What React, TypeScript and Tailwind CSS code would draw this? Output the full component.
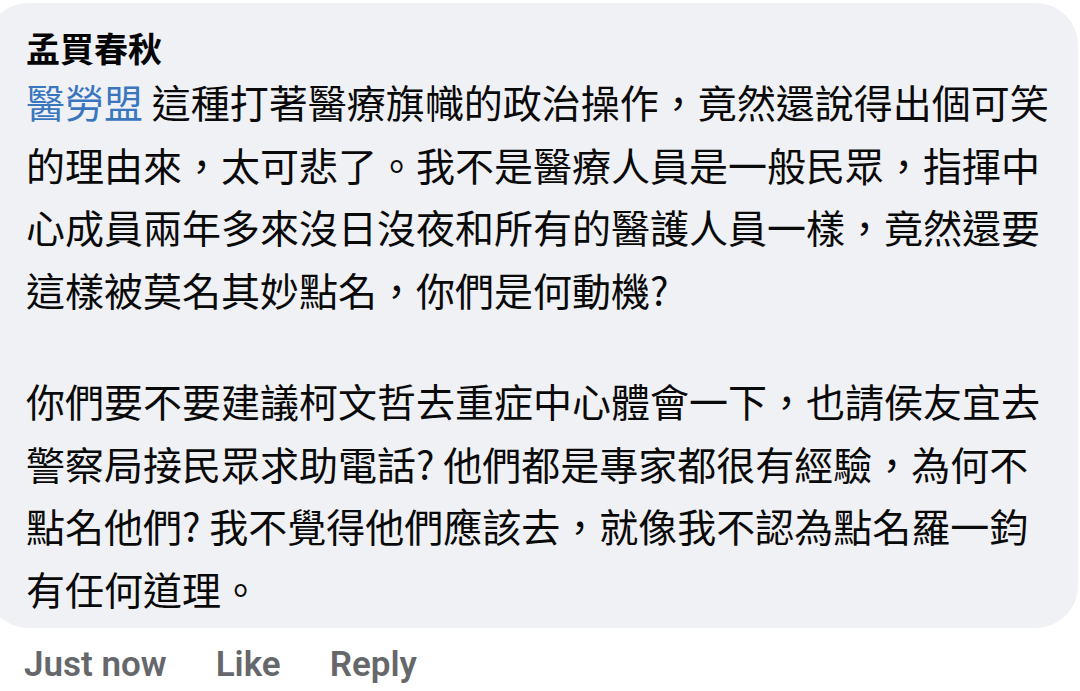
const cjk = "font-['Noto_Sans_CJK_TC','Noto_Sans_CJK_SC',sans-serif]";

const firstParagraph = [
  "的理由來，太可悲了。我不是醫療人員是一般民眾，指揮中",
  "心成員兩年多來沒日沒夜和所有的醫護人員一樣，竟然還要",
  "這樣被莫名其妙點名，你們是何動機?",
];

const secondParagraph = [
  "你們要不要建議柯文哲去重症中心體會一下，也請侯友宜去",
  "警察局接民眾求助電話? 他們都是專家都很有經驗，為何不",
  "點名他們? 我不覺得他們應該去，就像我不認為點名羅一鈞",
  "有任何道理。",
];

export default function App() {
  return (
    <div className="w-[1080px] h-[691px] overflow-hidden bg-white">
      {/* Comment bubble */}
      <div className="mt-[3px] ml-[-14px] w-[1092px] rounded-[42px] bg-[#f0f1f5] pl-[40px] pt-[23px] pb-[8px]">
        <div className={`${cjk} text-[34px] leading-[44px] font-bold text-[#050505]`}>
          孟買春秋
        </div>
        <div className={`${cjk} text-[39px] leading-[62.7px] text-[#0a0a0a] whitespace-nowrap`}>
          <div>
            <span className="text-[#3a76c0]">醫勞盟</span> 這種打著醫療旗幟的政治操作，竟然還說得出個可笑
          </div>
          {firstParagraph.map((line) => (
            <div key={line}>{line}</div>
          ))}
          <div className="mt-[48px]">
            {secondParagraph.map((line) => (
              <div key={line}>{line}</div>
            ))}
          </div>
        </div>
      </div>

      {/* Actions */}
      <div className="mt-[17px] pl-[24px] flex gap-[49px] font-['Roboto','Liberation_Sans',sans-serif] text-[35px] leading-[40px] font-semibold text-[#65676b]">
        <span>Just now</span>
        <span>Like</span>
        <span>Reply</span>
      </div>
    </div>
  );
}
